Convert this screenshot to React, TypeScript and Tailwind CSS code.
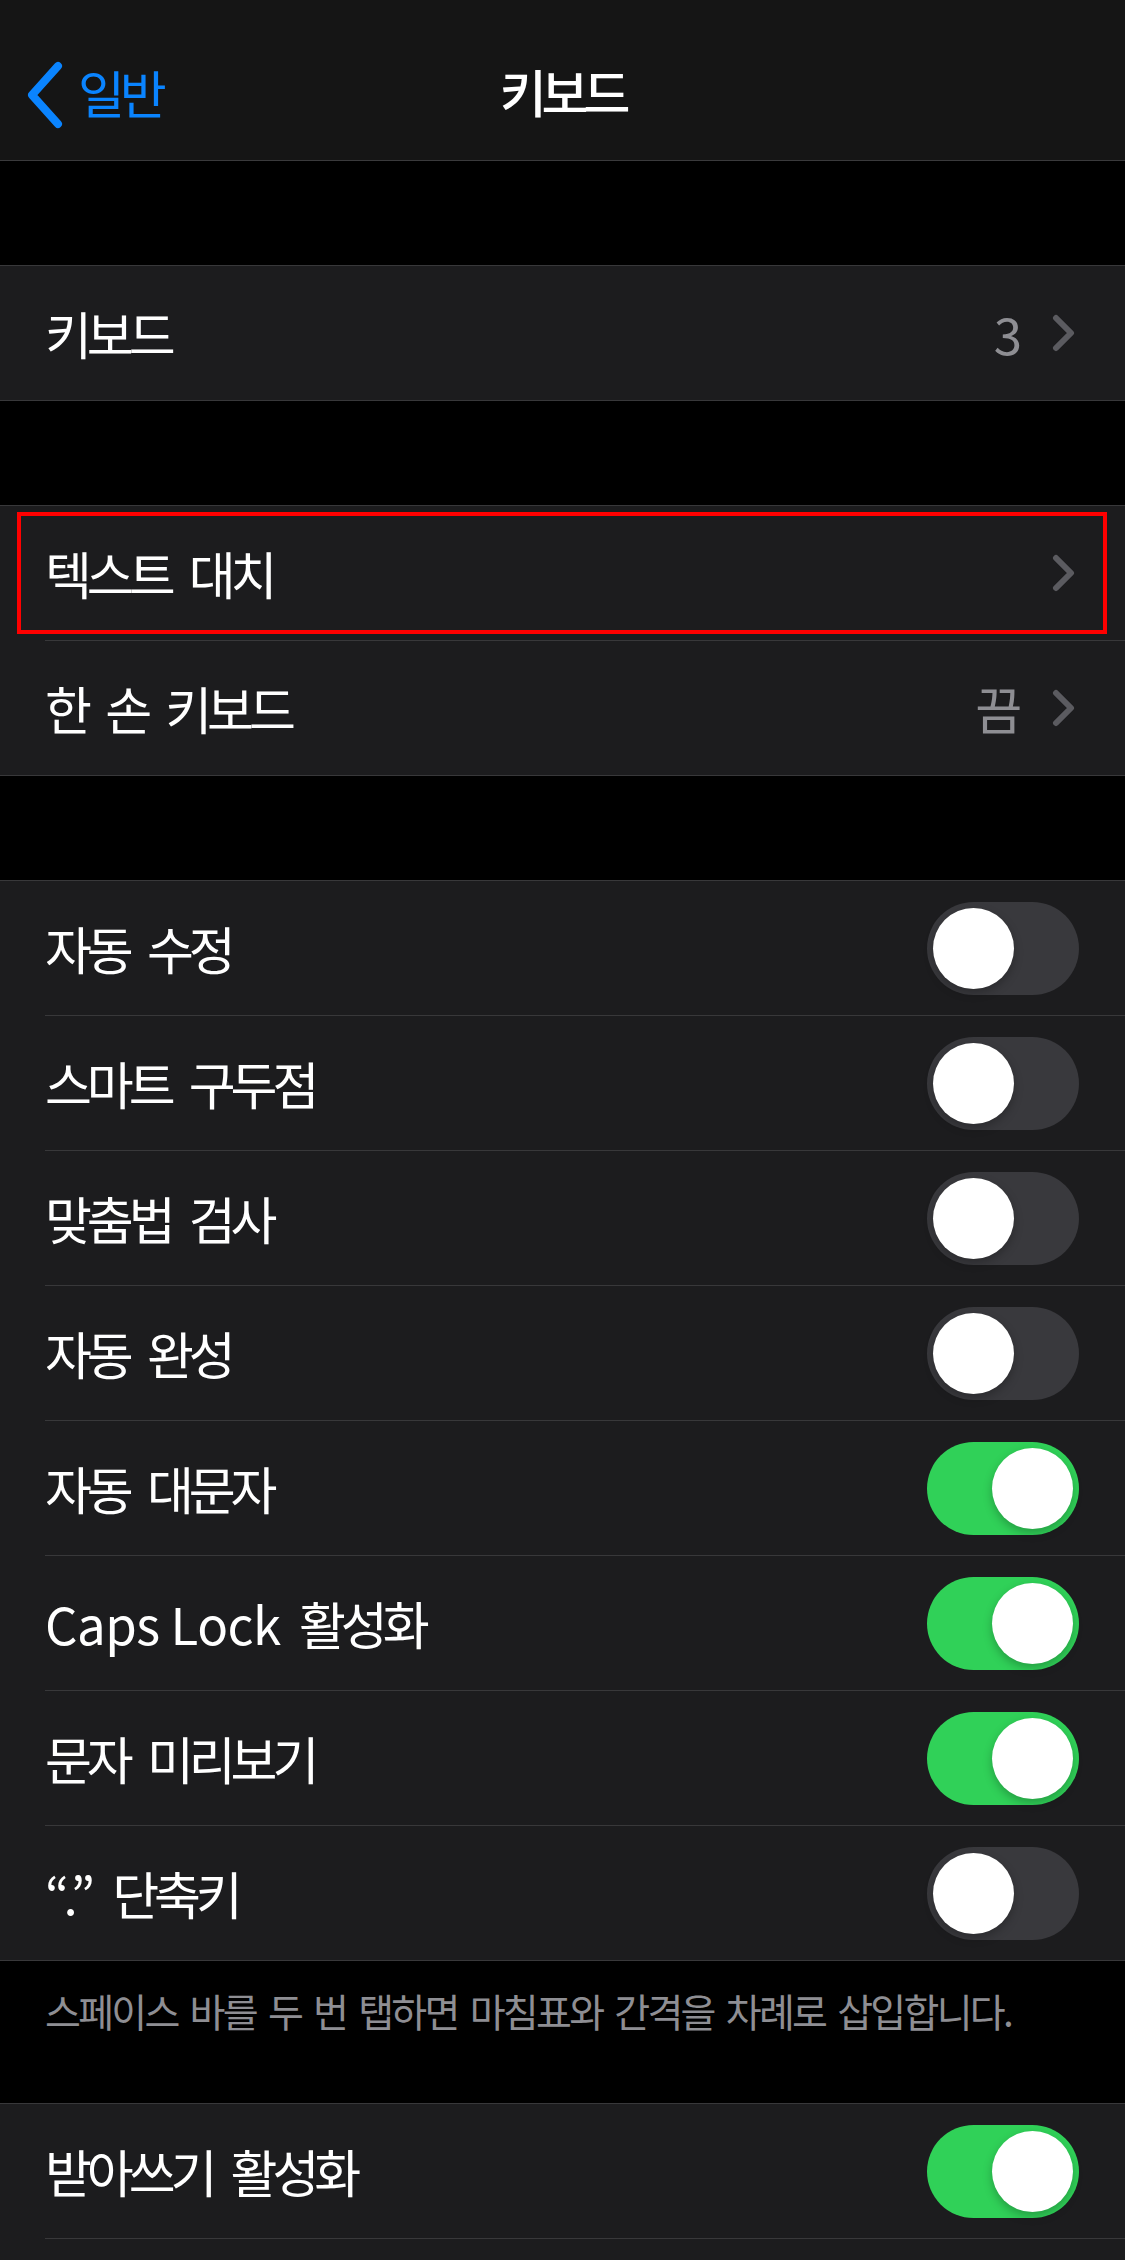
import React from "react";

const font = { fontFamily: '"Noto Sans CJK KR", "Noto Sans", sans-serif' };

function Chevron() {
  return (
    <svg width="24" height="38" viewBox="0 0 24 38" className="shrink-0">
      <polyline
        points="4,4 19,19 4,34"
        fill="none"
        stroke="#5b5b60"
        strokeWidth="6"
        strokeLinecap="round"
        strokeLinejoin="round"
      />
    </svg>
  );
}

function Toggle({ on }: { on: boolean }) {
  return (
    <div
      className={`w-[152px] h-[93px] rounded-full p-[6px] flex items-center shrink-0 ${
        on ? "bg-[#30d158] justify-end" : "bg-[#39393d] justify-start"
      }`}
    >
      <div className="w-[81px] h-[81px] rounded-full bg-white shadow-[0_4px_10px_rgba(0,0,0,0.25)]" />
    </div>
  );
}

type Row = {
  label: React.ReactNode;
  value?: string;
  chevron?: boolean;
  toggle?: boolean;
  highlight?: boolean;
};

function Group({ rows }: { rows: Row[] }) {
  return (
    <div className="bg-[#1c1c1e] border-y border-[#38383a]">
      {rows.map((r, i) => (
        <div key={i} className="relative">
          <div
            className={`h-[134px] flex items-center pl-[45px] ${
              r.toggle !== undefined ? "pr-[46px]" : "pr-[49px]"
            }`}
          >
            <span className="text-[51px] text-white tracking-[-0.1em] [word-spacing:12px] flex-1 whitespace-nowrap">
              {r.label}
            </span>
            {r.value && (
              <span className="text-[51px] text-[#8e8e93] tracking-[-0.08em] mr-[34px]">{r.value}</span>
            )}
            {r.chevron && <Chevron />}
            {r.toggle !== undefined && <Toggle on={r.toggle} />}
          </div>
          {i < rows.length - 1 && <div className="ml-[45px] h-px bg-[#38383a]" />}
          {r.highlight && (
            <div className="absolute left-[17px] right-[18px] top-[6px] bottom-[7px] border-[4px] border-[#ff0000]" />
          )}
        </div>
      ))}
    </div>
  );
}

export default function App() {
  return (
    <div className="w-[1125px] h-[2260px] bg-black overflow-hidden" style={font}>
      {/* Nav bar */}
      <div className="h-[161px] bg-[#151515] border-b border-[#3a3a3c] relative flex items-center justify-center">
        <div className="absolute left-[24px] top-[60px] flex items-center gap-[14px]">
          <svg width="40" height="68" viewBox="0 0 40 68">
            <polyline
              points="34,5 8,34 34,63"
              fill="none"
              stroke="#0a84ff"
              strokeWidth="8"
              strokeLinecap="round"
              strokeLinejoin="round"
            />
          </svg>
          <span className="text-[51px] text-[#0a84ff] tracking-[-0.1em] -mt-[6px]">일반</span>
        </div>
        <span className="text-[51px] font-medium text-white tracking-[-0.1em] mt-[22px]">키보드</span>
      </div>

      <div className="h-[104px]" />
      <Group rows={[{ label: "키보드", value: "3", chevron: true }]} />

      <div className="h-[104px]" />
      <Group
        rows={[
          { label: "텍스트 대치", chevron: true, highlight: true },
          { label: "한 손 키보드", value: "끔", chevron: true },
        ]}
      />

      <div className="h-[104px]" />
      <Group
        rows={[
          { label: "자동 수정", toggle: false },
          { label: "스마트 구두점", toggle: false },
          { label: "맞춤법 검사", toggle: false },
          { label: "자동 완성", toggle: false },
          { label: "자동 대문자", toggle: true },
          {
            label: (
              <>
                <span className="tracking-[-0.01em] [word-spacing:0px]">Caps Lock</span> 활성화
              </>
            ),
            toggle: true,
          },
          { label: "문자 미리보기", toggle: true },
          {
            label: (
              <>
                <span className="tracking-[-0.02em]">“.”</span> 단축키
              </>
            ),
            toggle: false,
          },
        ]}
      />

      <div className="h-[142px] pl-[45px] pt-[20px]">
        <p className="text-[39px] text-[#8e8e93] tracking-[-0.07em] [word-spacing:6px] whitespace-nowrap">
          스페이스 바를 두 번 탭하면 마침표와 간격을 차례로 삽입합니다.
        </p>
      </div>

      <Group rows={[{ label: "받아쓰기 활성화", toggle: true }, { label: "" }]} />
    </div>
  );
}
